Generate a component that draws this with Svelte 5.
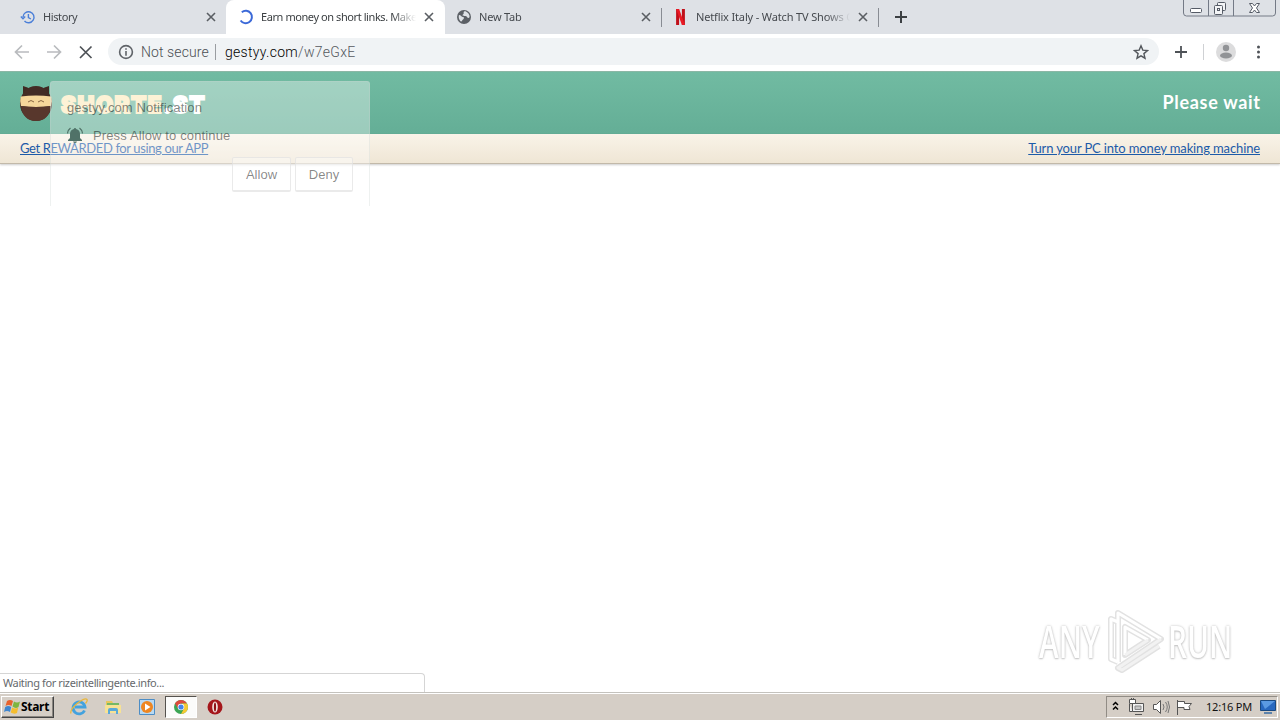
<script>
	let tabs = [
		{title: 'History', icon: 'history', width: 226, spacing: -.4},
		{title: 'Earn money on short links. Make money', icon: 'spinner', width: 219, spacing: -.42, active: true},
		{title: 'New Tab', icon: 'globe', width: 217, spacing: -.2},
		{title: 'Netflix Italy - Watch TV Shows Online', icon: 'netflix', width: 217, spacing: -.15},
	],
	time = '12:16 PM';
</script>

{#snippet cross(size, color, w)}
	<svg class="cross" width={size} height={size} viewBox="0 0 10 10" stroke={color} stroke-width={w}><path d="M1 1l8 8M9 1L1 9"/></svg>
{/snippet}

<div class="screen">
	<div class="tabs">
		{#each tabs as {title, icon, width, spacing, active}}
			<div class="tab {icon}" class:active style="width:{width}px">
				<svg class="favicon" width="16" height="16" viewBox="0 0 16 16" fill="none">
					{#if icon === 'history'}
						<path d="M3 8a5.5 5.5 0 1 1 1.5 4M.8 7.4L3 9.7l2.2-2.3M8.4 5v3.5l2.5 1.5" stroke="#4b7fd8" stroke-width="1.4"/>
					{:else if icon === 'spinner'}
						<path d="M3.800 3.200A6.200 6.200 0 1 1 2.600 11.500" stroke="#3b69d8" stroke-width="2"/>
					{:else if icon === 'globe'}
						<circle cx="8" cy="8" r="7" fill="#5c6066"/>
						<path d="M3 6c2 0 2.500 2 4 2s1 2 0 2.500S6 13 5 12.500 2 9 3 6zM8 2.500c-1 1 .5 2-1 3s1 1.500 2.500 1.500S11 9 12.500 9 14 6 12 4 9 2 8 2.500z" fill="#dee1e6"/>
					{:else}
						<path d="M4.600 16V0M10.400 16V0" stroke="#c0101a" stroke-width="3"/>
						<path d="M3.100 0h3l5.800 16h-3z" fill="#ea1924"/>
					{/if}
				</svg>
				<span class="title" style="letter-spacing:{spacing}px">{title}</span>
				{@render cross(10, '#5a5e63', 1.6)}
			</div>
		{/each}
		<svg class="newtab" width="12" height="12" viewBox="0 0 12 12" stroke="#3c4043" stroke-width="2"><path d="M6 0v12M0 6h12"/></svg>
		<div class="window">
			<svg width="102" height="17" viewBox="0 0 102 17" fill="none" stroke="#747a86">
				<path d="M.5 0v13q0 3 3 3h86q3 0 3-3V0M25.500 0v16M50.500 0v16"/>
				<rect x="7.500" y="8.500" width="11" height="4" rx="1" fill="#fff" stroke="#555b66"/>
				<g stroke="#555b66" fill="#f3f4f6"><rect x="34.500" y="2.500" width="8" height="8" rx="1"/><rect x="31.500" y="5.500" width="8" height="9" rx="1"/><rect x="34.500" y="8.500" width="2" height="2"/></g>
				<path d="M66.500 3.500h3l2 2.500 2-2.500h3l-3 4.500 3 4.500h-3l-2-2.500-2 2.500h-3l3-4.500z" fill="#fff" stroke="#555b66"/>
			</svg>
		</div>
	</div>

	<div class="toolbar">
		<svg class="nav" width="88" height="16" viewBox="0 0 88 16" fill="none" stroke-width="1.7">
			<path d="M15 8H2M8 1.500L1.500 8 8 14.500" stroke="#b9bbbe"/>
			<path d="M33 8h13M40 1.500L46.500 8 40 14.500" stroke="#b9bbbe"/>
			<path d="M66 2.500l11.500 11.500M77.500 2.500L66 14" stroke="#4e5257"/>
		</svg>
		<div class="omnibox">
			<svg width="16" height="16" viewBox="0 0 16 16" fill="none" stroke="#5f6368" stroke-width="1.6"><circle cx="8" cy="8" r="6.400"/><path d="M8 7v4.800M8 4.200v1.600"/></svg>
			<span class="secure">Not secure</span>
			<i></i>
			<span class="url">gestyy.com<b>/w7eGxE</b></span>
			<svg class="star" width="16" height="16" viewBox="0 0 16 16" fill="none" stroke="#53575c" stroke-width="1.400"><path d="M8 1.800l1.800 4.300 4.700.4-3.600 3.100 1.100 4.600L8 11.800l-4 2.400 1.100-4.600L1.500 6.500l4.700-.4z"/></svg>
		</div>
		<svg class="tools" width="100" height="24" viewBox="0 0 100 24">
			<path d="M12 6v12M6 12h12" stroke="#4e5257" stroke-width="1.800"/>
			<path d="M34.500 4v16" stroke="#cfd1d4"/>
			<circle cx="57" cy="12" r="10" fill="#dcdcdd"/><circle cx="57" cy="8" r="3.200" fill="#919396"/><ellipse cx="57" cy="15.500" rx="6" ry="3" fill="#919396"/>
			<g fill="#4e5257"><circle cx="89.500" cy="7" r="1.500"/><circle cx="89.500" cy="12" r="1.500"/><circle cx="89.500" cy="17" r="1.500"/></g>
		</svg>
	</div>

	<div class="page">
		<header>
			<svg width="34" height="38" viewBox="0 0 34 38">
				<path d="M4 11L4 2q5 1 8 4zM30 11V2q-5 1-8 4z" fill="#3f2a22"/>
				<ellipse cx="17" cy="19.500" rx="16" ry="17.500" fill="#432c25"/>
				<path d="M1.800 12.500q15.200-2 30.400 0Q33.500 17 32 22q-15 2-30 0-1.500-5-.2-9.500z" fill="#f6d79b"/>
				<path d="M9 18q3-3 6 0M19 18q3-3 6 0" stroke="#8b6844" fill="none"/>
				<path d="M2 22q15 2 30 0-2 15-15 15T2 22z" fill="#58372c"/>
			</svg>
			<div class="logo">SHORTE<b>.ST</b></div>
			<div class="wait">Please wait</div>
		</header>
		<div class="promo">
			<a class="app" href="#app">Get REWARDED for using our APP</a>
			<a class="pc" href="#pc">Turn your PC into money making machine</a>
		</div>

		<div class="popup">
			<div class="site">gestyy.com Notification</div>
			<div class="press">
				<svg width="16" height="16" viewBox="0 0 16 16"><path d="M8 1q1 0 1.200 1Q13 3 13 7v4l2 2v1H1v-1l2-2V7q0-4 3.800-5Q7 1 8 1zM6 14.500h4Q9.500 16 8 16t-2-1.500z" fill="#507268"/><path d="M.5 6.500Q.8 3 3.500 1M15.500 6.500Q15.200 3 12.500 1" fill="none" stroke="#507268" stroke-width="1.200"/></svg>
				<span>Press Allow to continue</span>
			</div>
			<div class="buttons">
				<button>Allow</button>
				<button class="deny">Deny</button>
			</div>
		</div>

		<div class="watermark">
			<span>ANY</span>
			<svg width="58" height="64" viewBox="0 0 58 64" fill="none" stroke-linejoin="round">
				<g stroke="#e2e2e2" stroke-width="6"><path d="M12 13l-7-3v40l7 3M12 53V4l43 26-43 29 4 2 37-24"/><path d="M19 18v28l23-15z"/></g>
				<g stroke="#fff" stroke-width="3"><path d="M12 13l-7-3v40l7 3M12 53V4l43 26"/><path d="M19 46V18l23 13"/></g>
				<path d="M55 30L12 59l4 2 37-24M42 31L19 46" stroke="#f2f2f2" stroke-width="3"/>
			</svg>
			<span class="run">RUN</span>
		</div>

		<div class="status">Waiting for rizeintellingente.info...</div>
	</div>

	<div class="taskbar">
		<div class="start">
			<svg width="17" height="16" viewBox="0 0 17 16">
				<path d="M3 2q3-2 6 0L7.500 7q-3-2-6 0z" fill="#e8622c"/><path d="M10 2.500q3 2 6 0L14.500 8q-3 2-6-.5z" fill="#7eb540"/>
				<path d="M1.200 8q3-2 6 0L6 13q-3-2-6 0z" fill="#3f86cf"/><path d="M8.200 8.500q3 2 6 0L13 14q-3 1.500-6.300-.5z" fill="#f5bd2d"/>
			</svg>
			<span>Start</span>
		</div>
		<div class="quick">
			<svg width="18" height="18" viewBox="0 0 18 18" fill="none"><path d="M14.500 12.500A6 6 0 1 1 15 9H5" stroke="#43a2de" stroke-width="2.800"/><path d="M1 15.500C-1 11 14-2 17 1.500q.8 1.500-1.500 4" stroke="#e9b73c" stroke-width="1.300"/></svg>
		</div>
		<div class="quick">
			<svg width="18" height="18" viewBox="0 0 18 18"><path d="M2 3h6l1 2h6v10H2z" fill="#e8c75c"/><path d="M3 5h12v3H3z" fill="#75b865"/><path d="M1 7h16v8H1z" fill="#f7e294"/><path d="M4 16v-4q0-2 2-2h6q2 0 2 2v4h-2v-3H6v3z" fill="#5aa9d8"/></svg>
		</div>
		<div class="quick">
			<svg width="18" height="18" viewBox="0 0 18 18"><path d="M1.500 1.500h15v15h-15z" fill="#b8d9f2" stroke="#4d8dc5"/><circle cx="9" cy="9" r="6" fill="#ee8621"/><path d="M7 5.500v7L12.500 9z" fill="#fff"/></svg>
		</div>
		<div class="quick current">
			<svg width="14" height="14" viewBox="0 0 14 14"><circle cx="7" cy="7" r="7" fill="#3ba554"/><path d="M1 3.500A7 7 0 0 1 13 3.500H7L4 8.500z" fill="#dd4a3c"/><path d="M13 3.500A7 7 0 0 1 7 14l3-5.500-2-5z" fill="#f6c932"/><circle cx="7" cy="7" r="3.300" fill="#fff"/><circle cx="7" cy="7" r="2.600" fill="#4384ea"/></svg>
		</div>
		<div class="quick">
			<svg width="16" height="16" viewBox="0 0 16 16"><circle cx="8" cy="8" r="7.500" fill="#a5161b"/><ellipse cx="8" cy="8" rx="2.800" ry="5.500" fill="#f3e6e2"/><ellipse cx="8" cy="8" rx="1.100" ry="4.500" fill="#8e1014"/></svg>
		</div>
		<div class="tray">
			<svg width="86" height="18" viewBox="0 0 86 18" fill="none" stroke="#555">
				<path d="M6 7l2.500-2.500L11 7M6 11.500L8.500 9l2.500 2.500" stroke="#000" stroke-width="1.500"/>
				<path d="M25.500 5.500h11v8h-11zM28 16.500h7M22.500 6v7.500h3" fill="#f2f2f2"/><path d="M22.500 1.500h6v4h-6zM24.500 0v2M26.500 0v2" fill="#fff"/><path d="M28 8h6v3.500h-6z" fill="#c8c8c8" stroke="#888"/>
				<path d="M46.500 6.500h3l4-4v13l-4-4h-3z" fill="#fff"/><path d="M56 6q2 3 0 6M58.500 4q3.500 5 0 10M61 3q3 6 0 12" stroke="#777"/>
				<path d="M70.500 2v15M70.500 3.500h7v2h7l-2.500 3 1 3h-6v-2h-6.500" fill="#fff"/>
			</svg>
			<span>{time}</span>
			<svg width="16" height="14" viewBox="0 0 16 14"><path d="M.5.5h15v10H.5z" fill="#2868bf" stroke="#194981"/><path d="M1 1h14L5 9z" fill="#5b9ae2"/><path d="M4 13h8" stroke="#5d83ab" stroke-width="2"/></svg>
		</div>
	</div>
</div>

<style>
	:global(body) {
		overflow: hidden;
	}
	.screen {
		width: 1280px;
		height: 720px;
		display: flex;
		flex-direction: column;
		background: #fff;
		font: 11px "Noto Sans", sans-serif;
	}
	svg {
		display: block;
		flex: none;
	}
	.tabs {
		height: 34px;
		display: flex;
		align-items: center;
		background: #dee1e6;
	}
	.tab {
		box-sizing: border-box;
		height: 34px;
		display: flex;
		align-items: center;
		padding: 0 11px 0 11px;
		color: #45494e;
	}
	.tab:first-child {
		padding: 0 10px 0 20px;
	}
	.tab.active {
		padding-left: 12px;
		background: #fff;
		border-radius: 8px 8px 0 0;
		color: #3c4043;
	}
	.tab.globe, .tab.netflix {
		background: linear-gradient(#888c93, #888c93) right 8px / 1px 19px no-repeat;
	}
	.title {
		flex: 1;
		overflow: hidden;
		white-space: nowrap;
		margin: 0 8px 0 7px;
		padding-bottom: 2px;
		mask-image: linear-gradient(to right, #000 calc(100% - 24px), transparent);
	}
	.newtab {
		margin-left: 16px;
	}
	.window {
		align-self: flex-start;
		margin-left: auto;
		width: 97px;
	}
	.toolbar {
		box-sizing: border-box;
		height: 37px;
		padding-bottom: 2px;
		display: flex;
		align-items: center;
		background: #fff;
	}
	.nav {
		margin-left: 14px;
	}
	.omnibox {
		box-sizing: border-box;
		width: 1051px;
		height: 27px;
		margin-left: 6px;
		padding: 0 10px;
		display: flex;
		align-items: center;
		border-radius: 14px;
		background: #f0f3f5;
		font: 300 14px Roboto, sans-serif;
	}
	.secure {
		width: 67px;
		margin-left: 7px;
		color: #4a4e53;
		letter-spacing: .1px;
		white-space: nowrap;
	}
	.omnibox i {
		width: 1px;
		height: 16px;
		margin: 0 9px 0 7px;
		background: #9a9da1;
	}
	.url {
		color: #000;
		letter-spacing: .3px;
	}
	.url b {
		font-weight: 300;
		color: #55595e;
	}
	.star {
		margin-left: auto;
	}
	.tools {
		margin-left: 10px;
	}
	.page {
		position: relative;
		flex: 1;
	}
	header {
		box-sizing: border-box;
		height: 63px;
		display: flex;
		align-items: center;
		padding: 0 20px 0 19px;
		border-top: 1px solid #8bb7a5;
		background: linear-gradient(#71bba2, #64ae96);
	}
	.logo {
		margin-left: 8px;
		padding-top: 3px;
		font: 900 22.5px/24px Inter, sans-serif;
		letter-spacing: 1.4px;
		color: #fcebbf;
		-webkit-text-stroke: 1.8px;
	}
	.logo b {
		font-weight: 900;
		color: #fff;
	}
	.wait {
		margin-left: auto;
		padding-bottom: 2px;
		font: 700 18px Lato, sans-serif;
		color: #fff;
		letter-spacing: .7px;
		margin-right: -.7px;
	}
	.promo {
		box-sizing: border-box;
		height: 30px;
		display: flex;
		align-items: center;
		justify-content: space-between;
		padding: 0 20px 1px;
		border-bottom: 1px solid #c2b9a9;
		background: linear-gradient(#f9f3e8, #efe6d5);
		box-shadow: 0 1px 2px #0003;
	}
	.promo a {
		font: 13px Lato, sans-serif;
		color: #1c5aa8;
		white-space: nowrap;
		letter-spacing: -.13px;
	}
	.promo .app {
		letter-spacing: -.38px;
	}
	.popup {
		position: absolute;
		left: 50px;
		top: 10px;
		box-sizing: border-box;
		width: 320px;
		height: 125px;
		padding: 17px 16px 0;
		border: 1px solid #c8d0cc4d;
		border-bottom: 0;
		border-radius: 3px 3px 0 0;
		background: #ffffff5c;
		font: 13px "Liberation Sans", sans-serif;
		color: #0000007a;
	}
	.site {
		line-height: 18px;
		letter-spacing: .1px;
	}
	.press {
		height: 18px;
		margin-top: 9px;
		display: flex;
		align-items: center;
		gap: 10px;
		letter-spacing: .13px;
	}
	.buttons {
		display: flex;
		justify-content: flex-end;
		gap: 4px;
		margin-top: 13px;
	}
	.buttons button {
		box-sizing: border-box;
		width: 59px;
		height: 35px;
		padding: 0;
		border: 1px solid #dddddda0;
		border-bottom: 2px solid #dddddda0;
		border-radius: 2px;
		background: #ffffff50;
		font: 13px "Liberation Sans", sans-serif;
		color: #0000007a;
	}
	.buttons .deny {
		width: 58px;
	}
	.watermark {
		position: absolute;
		left: 1039px;
		top: 538px;
		display: flex;
		align-items: center;
		font: 600 45px/64px "Open Sans", sans-serif;
		color: #fff;
	}
	.watermark span {
		width: 66px;
		transform: scaleX(.66);
		transform-origin: left;
		text-shadow: 0 0 3px #bbb, 0 1px 2px #ccc;
	}
	.watermark svg {
		margin-left: 1px;
	}
	.watermark .run {
		margin-left: 4px;
	}
	.status {
		position: absolute;
		left: 0;
		bottom: 0;
		box-sizing: border-box;
		width: 425px;
		height: 19px;
		padding-left: 3px;
		border: 1px solid #d5d5d5;
		border-width: 1px 1px 0 0;
		border-radius: 0 4px 0 0;
		background: #fff;
		line-height: 18px;
		letter-spacing: -.4px;
		color: #66696c;
	}
	.taskbar {
		box-sizing: border-box;
		height: 28px;
		display: flex;
		align-items: center;
		padding: 0 2px 0 1px;
		border-top: 1px solid #c4c2bd;
		background: #d5cec6;
		box-shadow: inset 0 1px #fff;
	}
	.start {
		box-sizing: border-box;
		width: 53px;
		height: 22px;
		margin-right: 9px;
		display: flex;
		align-items: center;
		padding-left: 2px;
		border: 1px solid;
		border-color: #fff #444 #444 #fff;
		box-shadow: inset -1px -1px #8a8680;
		font-size: 12px;
		font-weight: 700;
		letter-spacing: -.3px;
		color: #000;
	}
	.quick {
		box-sizing: border-box;
		width: 32px;
		height: 22px;
		margin-right: 2px;
		display: grid;
		place-items: center;
	}
	.current {
		border: 1px solid;
		border-color: #55524e #fff #fff #55524e;
		background: #fbfbfa;
	}
	.tray {
		box-sizing: border-box;
		width: 172px;
		height: 22px;
		margin-left: auto;
		display: flex;
		align-items: center;
		border: 1px solid;
		border-color: #918c85 #fff #fff #918c85;
		color: #111;
	}
	.tray span {
		width: 46px;
		margin: 0 8px 0 13px;
		white-space: nowrap;
		letter-spacing: -.2px;
	}
</style>
